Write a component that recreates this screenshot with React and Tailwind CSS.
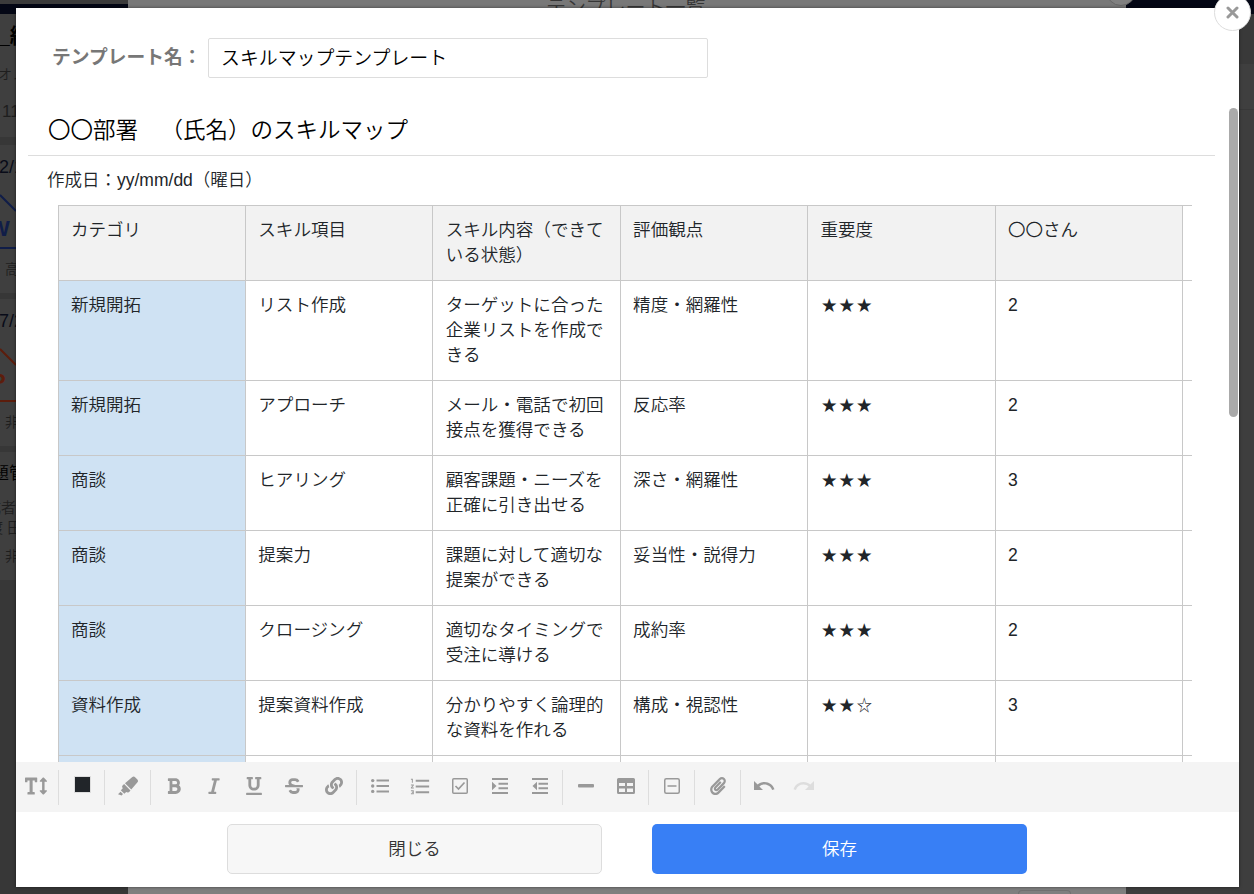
import React, { useState } from 'react';
import {
  FaTextHeight, FaHighlighter, FaBold, FaItalic, FaUnderline, FaStrikethrough,
  FaLink, FaPaperclip,
} from 'react-icons/fa';
import { MdFormatListBulleted, MdFormatListNumbered, MdUndo, MdRedo } from 'react-icons/md';

const HEADERS = ['カテゴリ', 'スキル項目', 'スキル内容（できている状態）', '評価観点', '重要度', '〇〇さん'];

const ROWS = [
  ['新規開拓', 'リスト作成', 'ターゲットに合った企業リストを作成できる', '精度・網羅性', '★★★', '2'],
  ['新規開拓', 'アプローチ', 'メール・電話で初回接点を獲得できる', '反応率', '★★★', '2'],
  ['商談', 'ヒアリング', '顧客課題・ニーズを正確に引き出せる', '深さ・網羅性', '★★★', '3'],
  ['商談', '提案力', '課題に対して適切な提案ができる', '妥当性・説得力', '★★★', '2'],
  ['商談', 'クロージング', '適切なタイミングで受注に導ける', '成約率', '★★★', '2'],
  ['資料作成', '提案資料作成', '分かりやすく論理的な資料を作れる', '構成・視認性', '★★☆', '3'],
  ['', '', '', '', '', ''],
];

/* Toolbar icons that the icon fonts don't have */
const CheckBoxIcon = () => (
  <svg width="16" height="16" viewBox="0 0 16 16" fill="none" stroke="currentColor">
    <rect x="0.75" y="0.75" width="14.5" height="14.5" rx="1" strokeWidth="1.5" />
    <path d="M3.5 8l3 3 6-6.5" strokeWidth="1.7" />
  </svg>
);

const BoxMinusIcon = () => (
  <svg width="16" height="16" viewBox="0 0 16 16" fill="none" stroke="currentColor" strokeWidth="1.5">
    <rect x="0.75" y="0.75" width="14.5" height="14.5" rx="1.5" />
    <path d="M3.5 8h9" />
  </svg>
);

const TableIcon = () => (
  <svg width="18" height="16" viewBox="0 0 18 16" fill="currentColor" fillRule="evenodd">
    <path d="M1.5 0h15A1.5 1.5 0 0 1 18 1.5v13a1.5 1.5 0 0 1-1.5 1.5h-15A1.5 1.5 0 0 1 0 14.5v-13A1.5 1.5 0 0 1 1.5 0zM2 5v3h6V5zM10 5v3h6V5zM2 10.5v3.5h6v-3.5zM10 10.5v3.5h6v-3.5z" />
  </svg>
);

const IndentIcon = ({ out }) => (
  <svg width="16" height="16" viewBox="0 0 16 16" fill="currentColor">
    <path d="M0 0h16v2H0zM6.5 4.7H16v2H6.5zM6.5 9.3H16v2H6.5zM0 14h16v2H0z" />
    <path d={out ? 'M5 3.7v8.6L0.5 8z' : 'M0 3.7v8.6L4.5 8z'} />
  </svg>
);

/* Bullets and digits are heavier than in the plain Material icons */
const BulletListIcon = () => (
  <svg width="18" height="16" viewBox="0 0 18 16" fill="currentColor">
    <path d="M5.5 1.6H18v2H5.5zM5.5 7H18v2H5.5zM5.5 12.4H18v2H5.5z" />
    <circle cx="1.7" cy="2.6" r="1.7" />
    <circle cx="1.7" cy="8" r="1.7" />
    <circle cx="1.7" cy="13.4" r="1.7" />
  </svg>
);

const LineIcon = () => (
  <svg width="16" height="4" viewBox="0 0 16 4" fill="currentColor"><rect width="16" height="3.4" rx="1" /></svg>
);

const TOOL_GROUPS = [
  [{ label: '文字サイズ', icon: <FaTextHeight size={22} /> }],
  [{ label: '文字色', icon: <span className="mb-1 h-[17px] w-[17px] border border-[#ddd] bg-[#212529]" /> }],
  [{ label: '背景色', icon: <FaHighlighter size={20} /> }],
  [
    { label: '太字', icon: <FaBold size={18} /> },
    { label: '斜体', icon: <FaItalic size={18} /> },
    { label: '下線', icon: <FaUnderline size={18} /> },
    { label: '取り消し線', icon: <FaStrikethrough size={18} /> },
    { label: 'リンク', icon: <FaLink size={18} /> },
  ],
  [
    { label: '箇条書き', icon: <BulletListIcon /> },
    { label: '番号付きリスト', icon: <MdFormatListNumbered size={23} /> },
    { label: 'チェックリスト', icon: <CheckBoxIcon /> },
    { label: 'インデント', icon: <IndentIcon /> },
    { label: 'インデント解除', icon: <IndentIcon out /> },
  ],
  [
    { label: '区切り線', icon: <LineIcon /> },
    { label: '表', icon: <TableIcon /> },
  ],
  [{ label: '折りたたみ', icon: <BoxMinusIcon /> }],
  [{ label: '添付', icon: <FaPaperclip size={18} /> }],
  [
    { label: '元に戻す', icon: <MdUndo size={24} /> },
    { label: 'やり直し', icon: <MdRedo size={24} />, disabled: true },
  ],
];

function Toolbar() {
  return (
    <div className="flex h-[50px] shrink-0 items-center bg-[#f4f4f4] text-[#999]">
      {TOOL_GROUPS.map((group, i) => (
        <div key={i} className={`flex items-center ${i === 0 ? '-ml-[0.6px]' : ''}`}>
          {i > 0 && <div className="mx-[2.5px] h-[35px] w-px bg-[#ddd]" />}
          {group.map(tool => (
            <button
              key={tool.label}
              aria-label={tool.label}
              disabled={tool.disabled}
              className="flex h-10 w-10 items-center justify-center pb-0.5 pl-[1.4px] disabled:text-[#ddd]"
            >
              {tool.icon}
            </button>
          ))}
        </div>
      ))}
    </div>
  );
}

function Cell({ text }) {
  if (text.startsWith('★')) {
    return <span className="pl-px text-[15.5px] tracking-[2px]">{text}</span>;
  }
  return text;
}

function SkillTable() {
  return (
    <div className="mr-[47px] ml-[41.55px] border-t border-[#c8c8c8] text-[17.55px] text-[#212529]">
      {[HEADERS, ...ROWS].map((row, r) => (
        <div key={r} className={`flex border-b border-[#c8c8c8] ${r === 1 ? 'h-[100px]' : 'h-[75px]'}`}>
          {row.map((cell, c) => (
            <div
              key={c}
              className={`w-[187.4px] shrink-0 border-l border-[#c8c8c8] pt-3 pr-2 pl-[12.4px] leading-[25px] ${
                r === 0 ? 'bg-[#f2f2f2]' : c === 0 ? 'bg-[#cfe2f3]' : ''
              }`}
            >
              <Cell text={cell} />
            </div>
          ))}
          <div className="grow border-l border-[#c8c8c8]" />
        </div>
      ))}
    </div>
  );
}

/* Dimmed page behind the dialog */
function Backdrop() {
  return (
    <div className="absolute inset-0 flex overflow-hidden bg-[#3c3c3c]">
      <div className="w-32 shrink-0 overflow-hidden whitespace-nowrap bg-[#373737] text-[17px] text-[#1e1e1e]">
        <div className="h-1 bg-[#3b3b3b]" />
        <div className="h-2.5 bg-[#040715]" />
        <div className="h-[123px] bg-[#3f3f3f] pt-2">
          <p className="-ml-0.5 text-[21px] leading-7 font-bold text-black">_組織</p>
          <p className="-ml-0.5 pt-3 text-[14px] leading-6">オノ</p>
          <p className="pt-3 pl-0.5 leading-7">11</p>
        </div>
        <div className="mt-2 h-[148px] bg-[#3f3f3f] pt-2.5">
          <p className="-ml-px text-[18px] leading-6 text-[#080b18]">2/1</p>
          <svg className="h-[70px] w-10" viewBox="0 0 40 70" fill="none">
            <path d="M0 16l16 16M0 69h16" stroke="#101d48" strokeWidth="2" />
            <text x="-11" y="57" fontSize="22" fontWeight="700" fill="#101d48">W</text>
          </svg>
          <p className="pt-2 pl-[5px] text-[14px] leading-6">高橋</p>
        </div>
        <div className="mt-1.5 h-[147px] bg-[#3f3f3f] pt-2.5">
          <p className="-ml-px text-[18px] leading-6 text-[#080b18]">7/2</p>
          <svg className="h-[69px] w-10" viewBox="0 0 40 69" fill="none">
            <path d="M0 16l16 16M0 68h16" stroke="#5c1d0c" strokeWidth="2" />
            <text x="-9" y="56" fontSize="22" fontWeight="700" fill="#5c1d0c">P</text>
          </svg>
          <p className="pt-2 pl-[5px] text-[14px] leading-6">非公</p>
        </div>
        <div className="mt-1.5 h-[128px] bg-[#3f3f3f] pt-2.5">
          <p className="-ml-2 leading-6 text-black">題管</p>
          <p className="-ml-3.5 pt-3 text-[15px] leading-5">成者</p>
          <p className="-ml-3 text-[15px] leading-5">渡 田</p>
          <p className="pt-2 pl-[5px] text-[14px] leading-5">非公</p>
        </div>
      </div>

      <div className="relative flex w-[998px] shrink-0 flex-col justify-between bg-[#7f7f7f]">
        <div className="flex h-2 items-start overflow-hidden bg-[#787878]">
          <p className="-mt-0.5 pl-[418px] text-[20px] leading-5 text-[#363636]">テンプレート一覧</p>
        </div>
        <div className="absolute -top-6 right-[-10px] h-[30px] w-[30px] rounded-full border border-[#666] bg-[#808080]" />
        <div className="mr-[55px] h-1 w-[53px] self-end rounded-t border border-b-0 border-[#707070]" />
      </div>

      <div className="grow">
        <div className="h-3.5 bg-[#040715]" />
        <div className="h-[50px] bg-[#393939]" />
        <div className="h-[46px] border-b border-[#383838] bg-[#3f3f3f]" />
        <div className="h-[784px] bg-[#3e3e3e]" />
      </div>
    </div>
  );
}

export default function App() {
  const [name, setName] = useState('スキルマップテンプレート');

  return (
    <div className="relative h-[894px] w-[1254px] overflow-hidden pt-2 pl-4 font-['Liberation_Sans','Noto_Sans_CJK_JP',sans-serif] text-[17.5px] font-[350] [text-spacing-trim:space-all]">
      <Backdrop />

      <div className="relative flex h-[879px] w-[1223px] flex-col bg-white shadow-[0_0_3px_rgba(0,0,0,0.5)]">
        {/* Template name */}
        <div className="flex h-[100px] shrink-0 items-start pt-[30px] pl-9 text-[18.75px]">
          <label htmlFor="template-name" className="w-[156px] whitespace-nowrap leading-[40px] font-bold text-[#777]">テンプレート名：</label>
          <input
            id="template-name"
            value={name}
            onChange={e => setName(e.target.value)}
            className="h-10 w-[500px] rounded-xs border border-[#ddd] px-3 pb-1 text-[18.9px] text-black outline-none"
          />
        </div>

        {/* Editor body */}
        <div className="relative min-h-0 grow overflow-hidden">
          <h1 className="mr-6 ml-3 h-12 border-b border-[#ddd] pl-5 text-[22.5px] leading-[46px] text-black">
            〇〇部署　（氏名）のスキルマップ
          </h1>
          <p className="h-[49px] pl-[31px] leading-[48px] text-[#212529]">作成日：yy/mm/dd（曜日）</p>
          <SkillTable />
          <div className="absolute top-0 right-[1px] h-[309px] w-[9px] rounded-full bg-[#aaa]" />
        </div>

        <Toolbar />

        {/* Footer */}
        <div className="flex h-[75px] shrink-0 justify-center gap-[50px] pt-3 pr-[1px]">
          <button className="h-[50px] w-[375px] rounded-[5px] border border-[#ddd] bg-[#f7f7f7] text-[#333]">閉じる</button>
          <button className="h-[50px] w-[375px] rounded-[5px] bg-[#387ff5] text-white">保存</button>
        </div>

        {/* Close */}
        <button
          aria-label="閉じる"
          className="absolute -top-3.5 right-[-12px] flex h-[37px] w-[37px] items-center justify-center rounded-full border border-[#ddd] bg-white text-[#999]"
        >
          <svg width="13" height="13" viewBox="0 0 13 13" stroke="currentColor" strokeWidth="3" strokeLinecap="round">
            <path d="M2 2l9 9M11 2l-9 9" />
          </svg>
        </button>
      </div>
    </div>
  );
}
